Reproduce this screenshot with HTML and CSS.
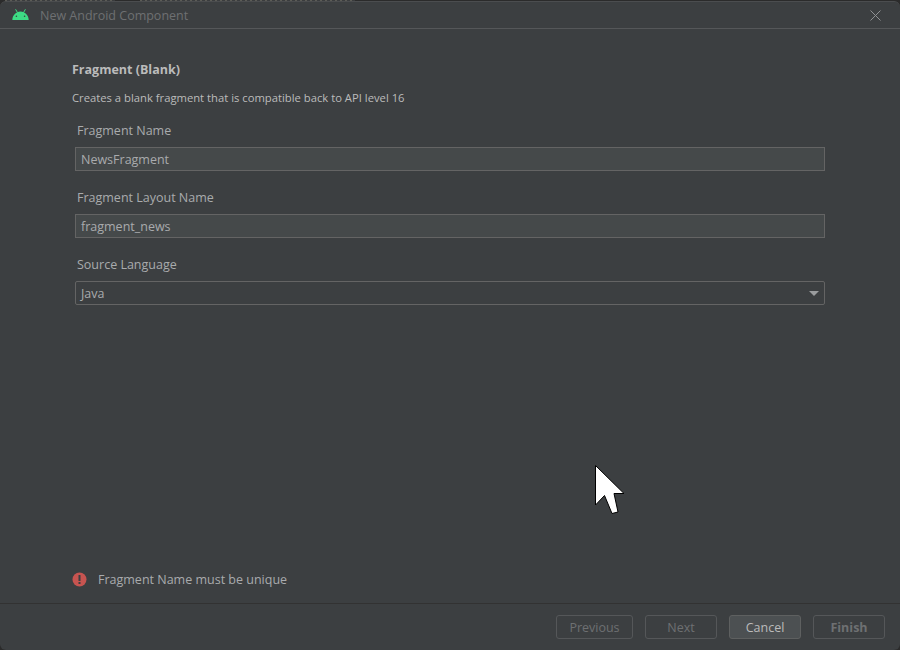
FILE: index.html
```html
<!DOCTYPE html>
<html lang="en">
<head>
    <meta charset="UTF-8">
    <title>New Android Component</title>
    <link rel="stylesheet" href="styles.css">
</head>
<body>
    <!-- Sliver of the window behind the dialog -->
    <div class="behind">
        <span class="behind-a"></span>
        <span class="behind-b"></span>
    </div>

    <div class="dialog">

        <!-- Title bar -->
        <div class="titlebar">
            <svg class="android" width="17" height="11" viewBox="0 0 17 11">
                <path fill="#3ddc84" d="M0.300 11C0.500 6.300 4 2.600 8.500 2.600s8 3.700 8.200 8.400z"/>
                <path stroke="#3ddc84" stroke-width="1" fill="none" d="M3.600 0.300l2 3.500M13.400 0.300l-2 3.500"/>
                <circle cx="4.400" cy="7.300" r="0.800" fill="#3c3f41"/>
                <circle cx="12.600" cy="7.300" r="0.800" fill="#3c3f41"/>
            </svg>
            <span class="title">New Android Component</span>
            <svg class="close" width="11" height="11" viewBox="0 0 11 11">
                <path stroke="#8f9193" stroke-width="1" d="M0.500 0.500l10 10M10.500 0.500l-10 10"/>
            </svg>
        </div>

        <!-- Form -->
        <div class="content">
            <h1>Fragment (Blank)</h1>
            <p class="desc">Creates a blank fragment that is compatible back to API level 16</p>

            <label>Fragment Name</label>
            <div class="field">NewsFragment</div>

            <label>Fragment Layout Name</label>
            <div class="field">fragment_news</div>

            <label>Source Language</label>
            <div class="select">
                <span>Java</span>
                <span class="arrow"></span>
            </div>

            <div class="error">
                <svg width="15" height="15" viewBox="0 0 15 15">
                    <circle cx="7.500" cy="7.500" r="7" fill="#c75450"/>
                    <rect x="6.500" y="3" width="2" height="6" fill="#3c3f41"/>
                    <rect x="6.500" y="10" width="2" height="2" fill="#3c3f41"/>
                </svg>
                <span>Fragment Name must be unique</span>
            </div>
        </div>

        <!-- Buttons -->
        <div class="footer">
            <button class="btn prev" disabled>Previous</button>
            <button class="btn next" disabled>Next</button>
            <button class="btn cancel">Cancel</button>
            <button class="btn finish" disabled>Finish</button>
        </div>
    </div>

    <!-- Mouse pointer -->
    <svg class="cursor" width="32" height="52" viewBox="0 0 32 52">
        <path fill="#fff" stroke="#000" stroke-width="1" d="M1.500 1.500V41L10.500 31.500L18 49.500L24 48L20 29.500H30z"/>
    </svg>
</body>
</html>
```

FILE: styles.css
```css
* {
    margin: 0;
    padding: 0;
    box-sizing: border-box;
}

body {
    width: 900px;
    height: 650px;
    overflow: hidden;
    background-color: #2b2b2b;
    font-family: "Open Sans", "Noto Sans", sans-serif;
    font-size: 12.5px;
    color: #bbbbbb;
    position: relative;
}

.behind {
    height: 1px;
    display: flex;
    padding-left: 5px;
}

.behind span {
    height: 1px;
    background-image: repeating-linear-gradient(90deg, #5c5c56 0 2px, #3a3c3e 2px 5px);
}

.behind-a { width: 110px; }

.behind-b {
    width: 215px;
    margin-left: 25px;
}

.dialog {
    width: 900px;
    height: 649px;
    background-color: #3c3f41;
    border-top: 1px solid #4b4d4f;
    border-radius: 6px;
    display: flex;
    flex-direction: column;
}

.titlebar {
    height: 27px;
    flex-shrink: 0;
    display: flex;
    align-items: center;
    padding: 0 19px 0 12px;
    border-bottom: 1px solid #555759;
}

.android {
    margin-right: 11px;
    margin-bottom: 2px;
}

.title {
    color: #6e7072;
    flex: 1;
}

.content {
    flex: 1;
    padding: 32px 75px 0 72px;
    display: flex;
    flex-direction: column;
}

h1 {
    font-size: 12.500px;
    font-weight: 700;
    line-height: 17px;
    color: #bbbbbb;
}

.desc {
    font-size: 11.250px;
    line-height: 16px;
    margin-top: 12px;
}

label {
    display: block;
    line-height: 17px;
    margin: 18px 0 8px 5px;
    color: #a9abad;
}

.desc + label {
    margin-top: 16px;
}

.field, .select {
    height: 24px;
    margin-left: 3px;
    border: 1px solid #646464;
    padding-left: 5px;
    line-height: 21px;
    color: #a9abad;
    display: flex;
    align-items: center;
    justify-content: space-between;
}

.field {
    background-color: #45494a;
}

.select {
    border-radius: 2px;
    padding-right: 5px;
}

.arrow {
    width: 0;
    height: 0;
    border-left: 5px solid transparent;
    border-right: 5px solid transparent;
    border-top: 5px solid #9a9c9e;
}

.error {
    margin-top: auto;
    margin-bottom: 15px;
    display: flex;
    align-items: center;
    gap: 11px;
    color: #a9abad;
}

.footer {
    height: 47px;
    flex-shrink: 0;
    border-top: 1px solid #323232;
    display: flex;
    justify-content: flex-end;
    gap: 12px;
    padding: 11px 15px 0 0;
}

.btn {
    height: 24px;
    font-family: inherit;
    font-size: 12.500px;
    background: transparent;
    border: 1px solid #555759;
    border-radius: 3px;
    color: #6e7072;
}

.prev { width: 77px; }
.next { width: 72px; }
.finish { width: 72px; font-weight: 700; }

.cancel {
    width: 72px;
    background-color: #4c5052;
    border-color: #5e6060;
    color: #bbbbbb;
}

.cursor {
    position: absolute;
    left: 594px;
    top: 464px;
}
```
